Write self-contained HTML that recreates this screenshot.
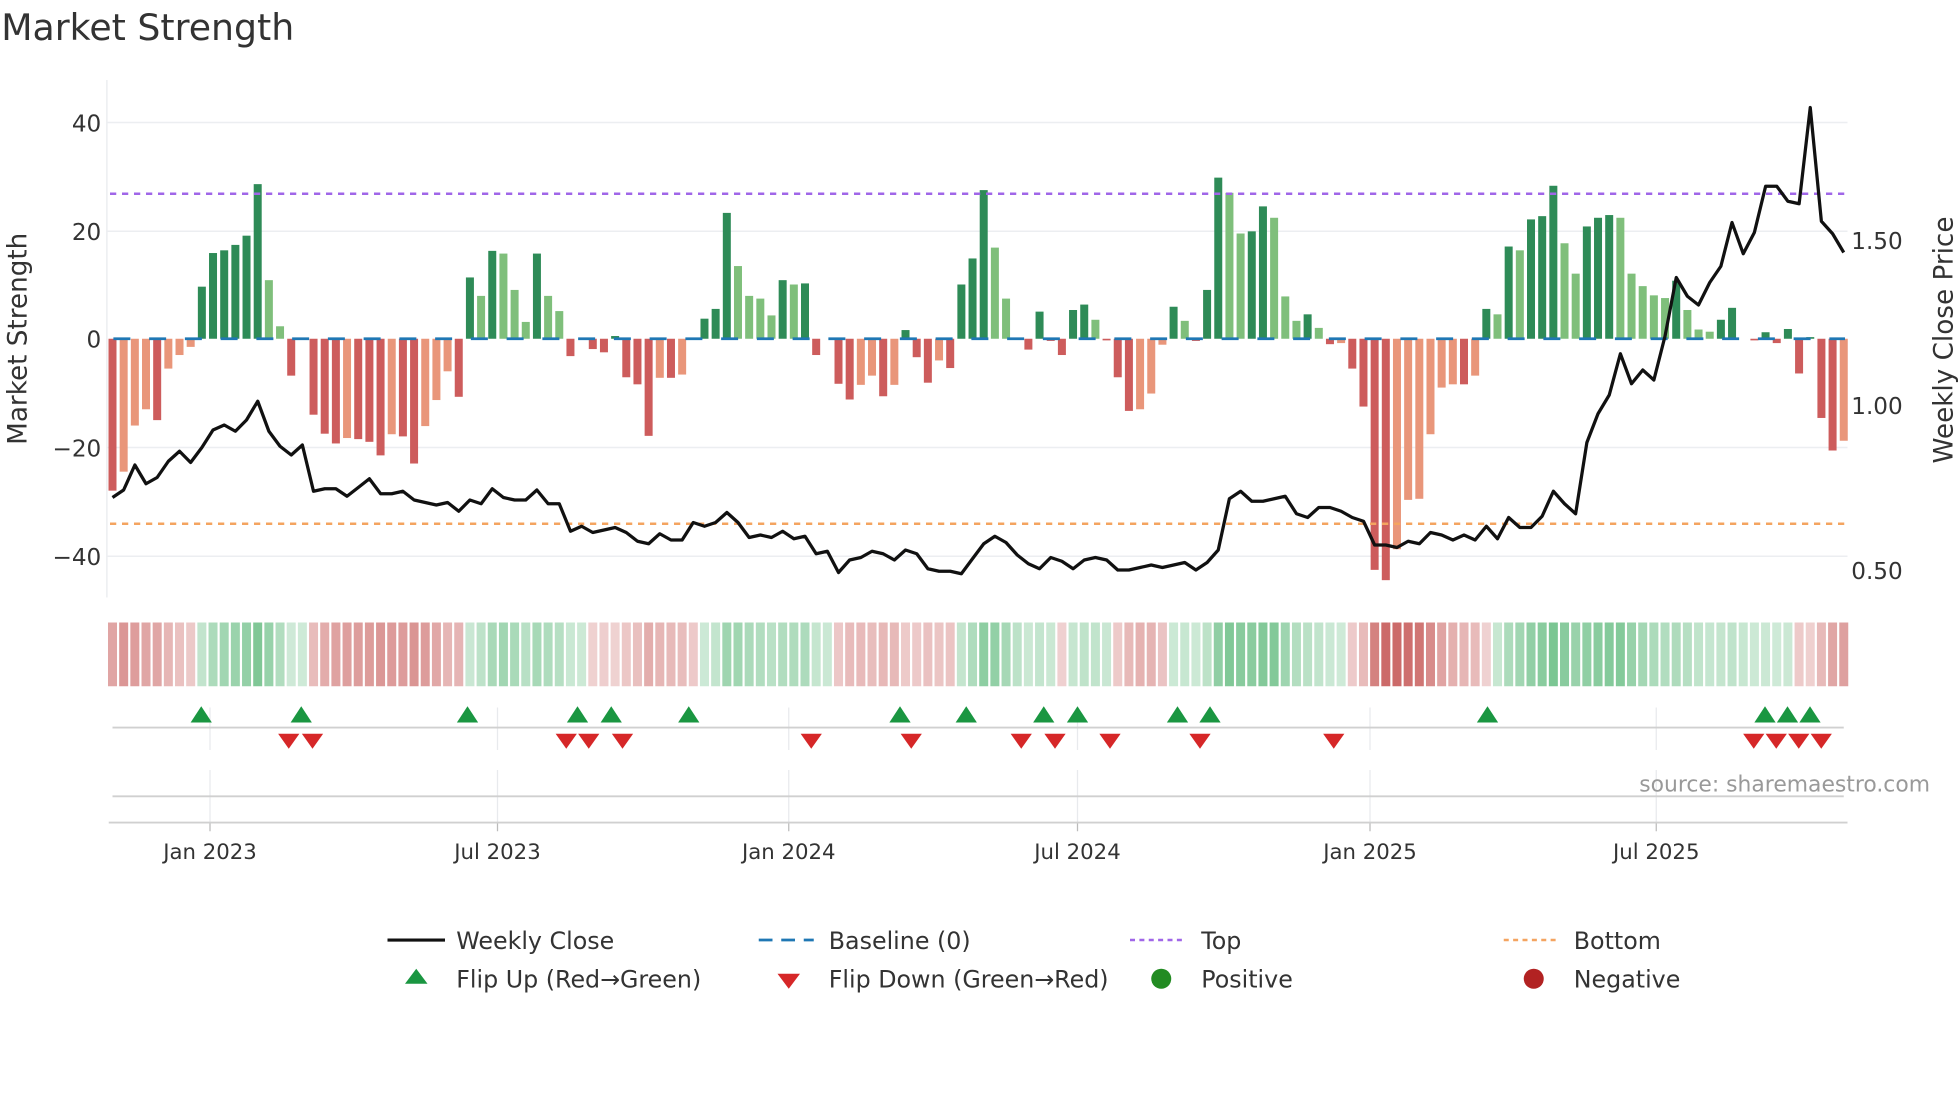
<!DOCTYPE html>
<html><head><meta charset="utf-8"><style>
html,body{margin:0;padding:0;background:#fff;width:1960px;height:1102px;overflow:hidden}
svg{display:block}
text{font-family:"DejaVu Sans","Liberation Sans",sans-serif;fill:#333}
</style></head><body>
<svg id="s" width="1960" height="1102" viewBox="0 0 1568 881.6" preserveAspectRatio="none" xmlns="http://www.w3.org/2000/svg">
<text x="1" y="32" font-size="29" fill="#333">Market Strength</text>
<g id="grid"></g>
<g id="bars"></g>
<g id="heat"></g>
<g id="mk"></g>
<text x="1544" y="633" font-size="17.5" text-anchor="end" style="fill:#999">source: sharemaestro.com</text>
<text transform="translate(21,271) rotate(-90)" font-size="21" text-anchor="middle">Market Strength</text>
<text transform="translate(1562,272) rotate(-90)" font-size="21" text-anchor="middle">Weekly Close Price</text>
<g font-size="18.5" text-anchor="end">
<text x="81" y="105">40</text><text x="81" y="192">20</text><text x="81" y="278">0</text>
<text x="81" y="365">−20</text><text x="81" y="452">−40</text>
</g>
<g font-size="18.5">
<text x="1481" y="199">1.50</text><text x="1481" y="331">1.00</text><text x="1481" y="463">0.50</text>
</g>
<g font-size="17" text-anchor="middle">
<text x="168" y="687">Jan 2023</text><text x="398" y="687">Jul 2023</text><text x="631" y="687">Jan 2024</text>
<text x="862" y="687">Jul 2024</text><text x="1096" y="687">Jan 2025</text><text x="1325" y="687">Jul 2025</text>
</g>
<g font-size="19">
<line x1="310" y1="752" x2="356" y2="752" stroke="#111" stroke-width="2.5"/>
<text x="365" y="759">Weekly Close</text>
<line x1="607" y1="752" x2="651" y2="752" stroke="#1f77b4" stroke-width="2.2" stroke-dasharray="11,7"/>
<text x="663" y="759">Baseline (0)</text>
<line x1="904" y1="752" x2="948" y2="752" stroke="#a066e8" stroke-width="2" stroke-dasharray="4,3.5"/>
<text x="961" y="759">Top</text>
<line x1="1203" y1="752" x2="1247" y2="752" stroke="#f4a460" stroke-width="2" stroke-dasharray="4,3.5"/>
<text x="1259" y="759">Bottom</text>
<polygon points="333,775 342,787 324,787" fill="#1a9641"/>
<text x="365" y="790">Flip Up (Red→Green)</text>
<polygon points="622,779 640,779 631,791" fill="#d62728"/>
<text x="663" y="790">Flip Down (Green→Red)</text>
<circle cx="929" cy="783" r="8" fill="#228b22"/>
<text x="961" y="790">Positive</text>
<circle cx="1227" cy="783" r="8" fill="#b22222"/>
<text x="1259" y="790">Negative</text>
</g>
<polyline id="price" fill="none" stroke="#111" stroke-width="2.6" stroke-linejoin="round"/>
</svg>
<script>
var NS="http://www.w3.org/2000/svg";
function el(p,t,a){var e=document.createElementNS(NS,t);for(var k in a)e.setAttribute(k,a[k]);p.appendChild(e);return e;}
var v=[-28,-24.5,-16,-13,-15,-5.5,-3,-1.5,9.6,15.8,16.3,17.3,19,28.5,10.8,2.3,-6.8,0,-14,-17.5,-19.3,-18.3,-18.5,-19,-21.5,-17.6,-18,-23,-16.1,-11.3,-6,-10.7,11.3,7.9,16.2,15.7,9,3.1,15.7,7.9,5.1,-3.2,0,-1.9,-2.5,0.5,-7.1,-8.4,-17.9,-7.2,-7.2,-6.6,0,3.7,5.5,23.2,13.4,7.9,7.4,4.3,10.8,10,10.2,
-3,0,-8.3,-11.2,-8.5,-6.8,-10.6,-8.5,1.6,-3.4,-8.1,-4,-5.4,10,14.8,27.4,16.8,7.4,0,-2,5,-0.4,-3,5.3,6.3,3.5,-0.3,-7.1,-13.3,-13,-10.1,-1.1,5.9,3.3,-0.4,9,29.7,26.9,19.4,19.8,24.4,22.3,7.8,3.3,4.5,2,-1,-0.8,-5.5,-12.5,-42.6,-44.5,
-38.8,-29.7,-29.5,-17.6,-9,-8.4,-8.4,-6.8,5.5,4.5,17,16.3,22,22.6,28.2,17.6,12,20.7,22.3,22.8,22.3,12,9.7,8,7.5,10.7,5.3,1.7,1.3,3.5,5.7,0,-0.3,1.2,-0.8,1.8,-6.4,0.3,-14.6,-20.6,-18.8];
var n=v.length,x0=90,x1=1475,p=(x1-x0)/(n-1),Z=271,U=4.34;
var g=document.getElementById('grid');
[98,185,358,445].forEach(function(y){el(g,'line',{x1:85,x2:1478,y1:y,y2:y,stroke:'#eceef1','stroke-width':1.2});});
el(g,'line',{x1:85.5,x2:85.5,y1:64,y2:478,stroke:'#eceef1','stroke-width':1.2});
[168,398,631,862,1096,1325].forEach(function(x){
 el(g,'line',{x1:x,x2:x,y1:566,y2:600,stroke:'#e8eaed','stroke-width':1});
 el(g,'line',{x1:x,x2:x,y1:616,y2:658,stroke:'#e8eaed','stroke-width':1});
 el(g,'line',{x1:x,x2:x,y1:658,y2:665,stroke:'#bbb','stroke-width':1});
});
el(g,'line',{x1:90,x2:1475,y1:582,y2:582,stroke:'#d0d0d0','stroke-width':1.5});
el(g,'line',{x1:90,x2:1475,y1:637,y2:637,stroke:'#d0d0d0','stroke-width':1.5});
el(g,'line',{x1:87,x2:1478,y1:658,y2:658,stroke:'#d0d0d0','stroke-width':1.5});
var b=document.getElementById('bars'),h=document.getElementById('heat');
var s=0;
for(var i=0;i<n;i++){
 var x=x0+i*p,val=v[i],pr=i?v[i-1]:0;
 var dark=(Math.abs(val)>=Math.abs(pr))||(val*pr<=0);
 var c=val>=0?(dark?'#2e8b57':'#7fbf7b'):(dark?'#cd5c5c':'#e9967a');
 var hh=Math.abs(val)*U;
 if(hh>0.3)el(b,'rect',{x:x-3.2,y:val>=0?Z-hh:Z,width:6.4,height:hh,fill:c});
 s=s*0.45+val*0.55;
 var t=Math.min(1,Math.abs(s)/35),a=0.25+0.6*t,col;
 if(s>=0){col='rgb('+Math.round(255-(255-60)*a)+','+Math.round(255-(255-170)*a)+','+Math.round(255-(255-95)*a)+')';}
 else{col='rgb('+Math.round(255-(255-195)*a)+','+Math.round(255-(255-80)*a)+','+Math.round(255-(255-78)*a)+')';}
 el(h,'rect',{x:x-3.6,y:498,width:7.2,height:51,fill:col});
}
el(b,'line',{x1:90.7,x2:1476,y1:Z,y2:Z,stroke:'#1f77b4','stroke-width':2.2,'stroke-dasharray':'13.6,15'});
el(b,'line',{x1:88,x2:1476,y1:155,y2:155,stroke:'#a066e8','stroke-width':2,'stroke-dasharray':'5,4.6'});
el(b,'line',{x1:88,x2:1476,y1:419,y2:419,stroke:'#f4a460','stroke-width':2,'stroke-dasharray':'5,4.6'});
var py=[398,392,372,387,382,369,361,370,358,344,340,345,336,321,345,357,364,356,393,391,391,397,390,383,395,395,393,400,402,404,402,409,400,403,391,398,400,400,392,403,403,425,421,426,424,422,426,433,435,427,432,432,418,421,418,410,418,430,428,430,425,431,429,443,441,458,448,446,441,443,448,440,443,455,457,457,459,447,435,429,434,444,451,455,446,449,455,448,446,448,456,456,454,452,454,452,450,456,450,440,399,393,401,401,399,397,411,414,406,406,409,414,417,436,436,438,433,435,426,428,432,428,432,421,431,414,422,422,413,393,403,411,354,331,316,283,307,296,304,269,222,237,244,226,213,178,203,186,149,149,161,163,86,177,187,202];
var pts=[],m=py.length,q=(x1-x0)/(m-1);
for(var j=0;j<m;j++)pts.push((x0+j*q).toFixed(1)+','+py[j]);
document.getElementById('price').setAttribute('points',pts.join(' '));
var mk=document.getElementById('mk');
[161,241,374,462,489,551,720,773,835,862,942,968,1190,1412,1430,1448].forEach(function(x){
 el(mk,'polygon',{points:(x)+',565 '+(x+8.5)+',578 '+(x-8.5)+',578',fill:'#1a9641'});});
[231,250,453,471,498,649,729,817,844,888,960,1067,1403,1421,1439,1457].forEach(function(x){
 el(mk,'polygon',{points:(x-8.5)+',587 '+(x+8.5)+',587 '+x+',599',fill:'#d62728'});});
</script>
</body></html>
